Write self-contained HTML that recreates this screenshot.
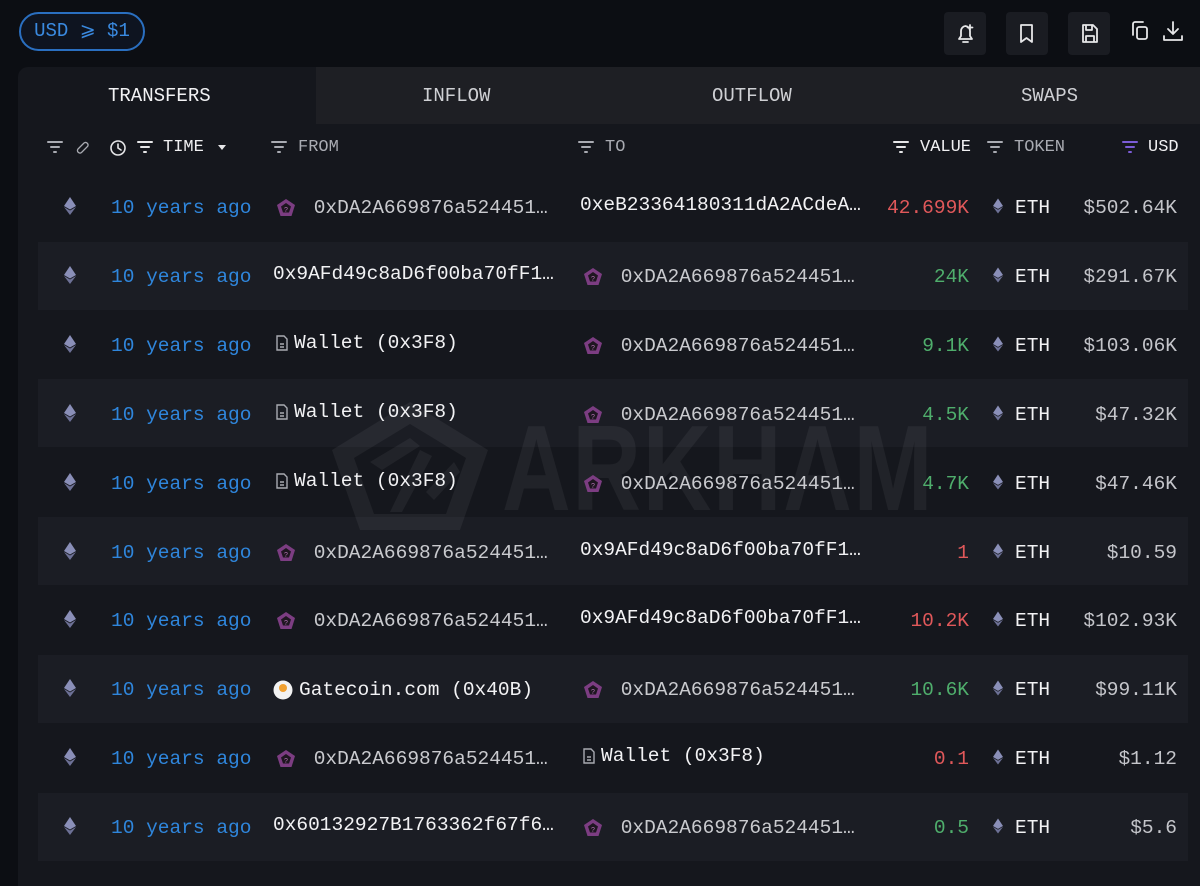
<!DOCTYPE html>
<html><head><meta charset="utf-8"><style>
*{margin:0;padding:0;box-sizing:border-box}
body{width:1200px;height:886px;background:#0c0e13;font-family:"Liberation Mono",monospace;color:#e8e8ea;position:relative;overflow:hidden}
.a{position:absolute;white-space:nowrap}
.pill{left:19px;top:12px;width:126px;height:39px;border:2px solid #2a6fc0;border-radius:20px;color:#3a8ae0;font-size:19px;line-height:35px;text-align:center;background:#0e1420}
.btn{top:12px;width:42px;height:43px;background:#1a1c22;border-radius:4px}
.panel{left:18px;top:67px;width:1182px;height:819px;background:#15171d;border-radius:10px 0 0 0}
.tabbg{left:316px;top:67px;width:884px;height:57px;background:#1e1f24}
.tab{top:85px;font-size:19px;color:#cfd0d4}
.hd{top:138px;font-size:17px;color:#a9abb2}
.stripe{left:38px;width:1150px;height:68px;background:#1b1d24}
.cell{font-size:19.5px}
.t{color:#2f86dc}
.g{color:#c9cace}
.w{color:#f2f2f4}
.red{color:#e0585a}.grn{color:#4fae6c}
.usd{color:#c4c5ca;text-align:right;width:150px}
.val{text-align:right;width:120px}
.fl{display:inline-block;vertical-align:middle;margin-right:6px}
</style></head><body>
<div class="a pill">USD ⩾ $1</div>
<div class="a btn" style="left:944px"></div>
<div class="a btn" style="left:1006px"></div>
<div class="a btn" style="left:1068px"></div>
<svg class="a" style="left:944px;top:12px" width="166" height="43" fill="none" stroke="#e6e6e8" stroke-width="1.8" stroke-linecap="round" stroke-linejoin="round">
<path d="M15 27h13l-2-3v-5a5 5 0 0 0-4.5-5 5 5 0 0 0-4.5 5v5z M19 30h5 M26 13v5 M23.5 15.5h5"/>
<path d="M77 13h11v17l-5.5-4-5.5 4z"/>
<path d="M139 13h10l4 4v13h-14z M142 13v5h6v-5 M142 30v-6h8v6"/>
</svg>
<svg class="a" style="left:1128px;top:18px" width="60" height="30" fill="none" stroke="#e6e6e8" stroke-width="1.8" stroke-linecap="round" stroke-linejoin="round">
<rect x="9" y="9" width="10" height="12" rx="2"/><path d="M5 17V6a2 2 0 0 1 2-2h8"/>
<path d="M45 4v12 M40 11l5 5 5-5 M36 18v4h18v-4"/>
</svg>
<div class="a panel"></div>
<div class="a tabbg"></div>
<div class="a tab w" style="left:108px;color:#f2f2f4">TRANSFERS</div>
<div class="a tab" style="left:422px">INFLOW</div>
<div class="a tab" style="left:712px">OUTFLOW</div>
<div class="a tab" style="left:1021px">SWAPS</div>
<svg class="a" style="left:46px;top:139px" width="1140" height="20" fill="none" stroke-width="2" stroke-linecap="round">
<g stroke="#a9abb2"><path d="M2 3h14M5 8h8M8 13h2"/>
<path d="M32 10l6-6a2.5 2.5 0 0 1 3.5 3.5l-6 6a2.5 2.5 0 0 1-3.5-3.5z" stroke-width="1.3"/></g>
<g stroke="#e6e6e8"><circle cx="72" cy="9" r="7" stroke-width="1.6"/><path d="M72 5v4l3 2" stroke-width="1.6"/>
<path d="M92 3h14M95 8h8M98 13h2"/></g>
<path d="M172 6h8l-4 5z" fill="#e6e6e8" stroke="none"/>
<g stroke="#a9abb2"><path d="M226 3h14M229 8h8M232 13h2"/><path d="M533 3h14M536 8h8M539 13h2"/></g>
<g stroke="#e6e6e8"><path d="M848 3h14M851 8h8M854 13h2"/></g>
<g stroke="#a9abb2"><path d="M942 3h14M945 8h8M948 13h2"/></g>
<g stroke="#7b5cd6"><path d="M1077 3h14M1080 8h8M1083 13h2"/></g>
</svg>
<div class="a hd" style="left:163px;color:#f0f0f2">TIME</div>
<div class="a hd" style="left:298px">FROM</div>
<div class="a hd" style="left:605px">TO</div>
<div class="a hd" style="left:920px;color:#f0f0f2">VALUE</div>
<div class="a hd" style="left:1014px">TOKEN</div>
<div class="a hd" style="left:1148px;color:#f0f0f2">USD</div>

<div class="a stripe" style="top:242px"></div>
<div class="a stripe" style="top:379px"></div>
<div class="a stripe" style="top:517px"></div>
<div class="a stripe" style="top:655px"></div>
<div class="a stripe" style="top:793px"></div>

<svg class="a" style="left:330px;top:402px" width="160" height="130" fill="rgba(255,255,255,0.055)">
<path d="M80 0l78 48-28 80H30L2 48z M80 22L24 56l20 56h72l20-56z"/>
<path d="M40 60l40-24 10 8-38 24z M60 110l30-62 12 6-30 56z M96 90l28-30 6 10-26 28z"/>
</svg>
<div class="a" style="left:502px;top:398px;font-family:'Liberation Sans',sans-serif;font-weight:bold;font-size:122px;color:rgba(255,255,255,0.055);transform:scaleX(0.78);transform-origin:left;letter-spacing:2px">ARKHAM</div>

<div id="rows"></div>
<script>
var eth='<svg class="fl" width="12" height="18" viewBox="0 0 12 18"><path d="M6 0L0 9l6 3.5L12 9z" fill="#8a8fb8"/><path d="M6 13.5L0 10l6 8 6-8z" fill="#6d7196"/></svg>';
var ethS='<svg class="fl" width="10" height="16" viewBox="0 0 12 18"><path d="M6 0L0 9l6 3.5L12 9z" fill="#8a8fb8"/><path d="M6 13.5L0 10l6 8 6-8z" fill="#6d7196"/></svg>';
var pent='<svg class="fl" width="20" height="20" viewBox="0 0 20 20"><path d="M10 1l9 6-3.5 11h-11L1 7z" fill="#7c3d82"/><path d="M10 5l5 3.5-2 6H7l-2-6z" fill="#1e1620"/><text x="10" y="14" font-size="7" fill="#b070b0" text-anchor="middle" font-family="Liberation Sans">?</text></svg>';
var doc='<svg class="fl" width="14" height="16" viewBox="0 0 14 16" fill="none" stroke="#a9abb2" stroke-width="1.4"><path d="M2 1h7l3 3v11H2z M5 9h4M5 12h4"/></svg>';
var gate='<svg class="fl" width="20" height="20"><circle cx="10" cy="10" r="9.5" fill="#f2f2f2"/><circle cx="10" cy="8" r="4" fill="#f0a030"/></svg>';
var DA='0xDA2A669876a524451…';
var R=[
['p',DA,'w','0xeB23364180311dA2ACdeA…','42.699K','red','$502.64K'],
['w','0x9AFd49c8aD6f00ba70fF1…','p',DA,'24K','grn','$291.67K'],
['d','Wallet (0x3F8)','p',DA,'9.1K','grn','$103.06K'],
['d','Wallet (0x3F8)','p',DA,'4.5K','grn','$47.32K'],
['d','Wallet (0x3F8)','p',DA,'4.7K','grn','$47.46K'],
['p',DA,'w','0x9AFd49c8aD6f00ba70fF1…','1','red','$10.59'],
['p',DA,'w','0x9AFd49c8aD6f00ba70fF1…','10.2K','red','$102.93K'],
['g','Gatecoin.com (0x40B)','p',DA,'10.6K','grn','$99.11K'],
['p',DA,'d','Wallet (0x3F8)','0.1','red','$1.12'],
['w','0x60132927B1763362f67f6…','p',DA,'0.5','grn','$5.6']];
function ad(k,t,x,top){
 if(k=='p')return '<div class="a cell g" style="left:'+(x+3)+'px;top:'+top+'px">'+pent+' '+t+'</div>';
 if(k=='d')return '<div class="a cell w" style="left:'+(x+2)+'px;top:'+(top-3)+'px">'+doc.replace('class="fl"','class="fl" style="margin-right:5px"')+t+'</div>';
 if(k=='g')return '<div class="a cell w" style="left:'+x+'px;top:'+top+'px">'+gate+t+'</div>';
 return '<div class="a cell w" style="left:'+x+'px;top:'+(top-3)+'px">'+t+'</div>';
}
var h='';
R.forEach(function(r,i){
 var c=207+i*68.9, top=Math.round(c-10);
 h+='<div class="a" style="left:64px;top:'+(Math.round(c)-10)+'px">'+eth+'</div>';
 h+='<div class="a cell t" style="left:111px;top:'+top+'px">10 years ago</div>';
 h+=ad(r[0],r[1],273,top);
 h+=ad(r[2],r[3],580,top);
 h+='<div class="a cell val '+r[5]+'" style="left:849px;top:'+top+'px">'+r[4]+'</div>';
 h+='<div class="a" style="left:993px;top:'+(Math.round(c)-10)+'px">'+ethS+'</div>';
 h+='<div class="a cell w" style="left:1015px;top:'+top+'px">ETH</div>';
 h+='<div class="a cell usd" style="left:1027px;top:'+top+'px">'+r[6]+'</div>';
});
document.getElementById('rows').innerHTML=h;
</script>
</body></html>
